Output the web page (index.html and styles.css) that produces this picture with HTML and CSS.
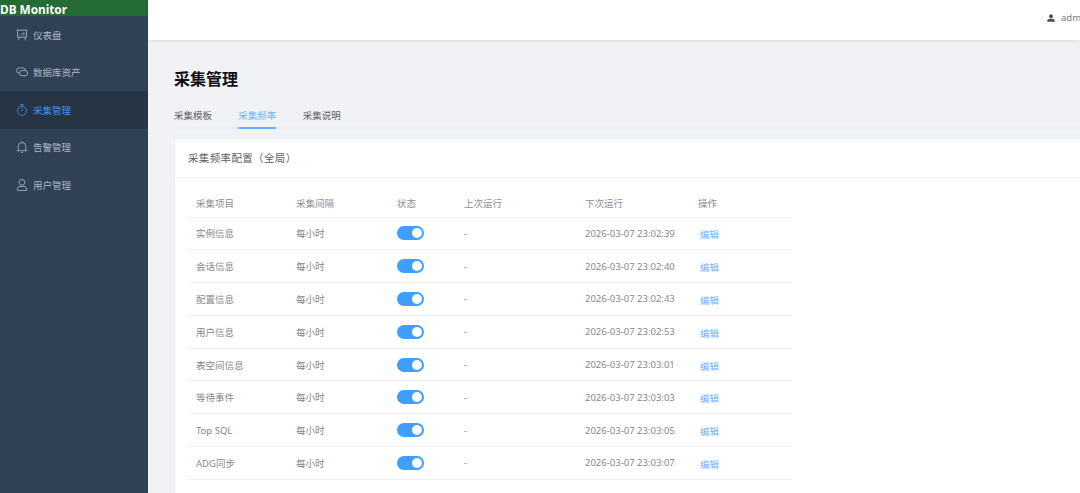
FILE: index.html
```html
<!DOCTYPE html>
<html lang="zh-CN">
<head>
<meta charset="utf-8">
<title>DB Monitor</title>
<link rel="stylesheet" href="styles.css">
</head>
<body>
<div class="app">
  <aside class="sidebar">
    <div class="logo">DB Monitor</div>
    <nav class="menu">
      <a class="menu-item"><svg class="mi" viewBox="0 0 16 16"><path d="M.8 1.5h14.4M2 1.5v9.5h12V1.5M4.5 11L3.3 15M11.5 11l1.2 4M5.5 8.5V7.5M8 8.5V6M10.5 8.5V4.5"/></svg><span>仪表盘</span></a>
      <a class="menu-item"><svg class="mi" viewBox="0 0 16 16"><path d="M5 9.5H4.2a3.5 3.5 0 0 1 0-7h5.3a3.5 3.5 0 0 1 3.4 3"/><rect x="4.5" y="6" width="11" height="7" rx="3.5"/></svg><span>数据库资产</span></a>
      <a class="menu-item active"><svg class="mi" viewBox="0 0 16 16"><circle cx="8" cy="9.2" r="6"/><path d="M5.8.8h4.4M8 .8v2.4M8 6v3.5"/></svg><span>采集管理</span></a>
      <a class="menu-item"><svg class="mi" viewBox="0 0 16 16"><path d="M1 13h14M3 13V7a5 5 0 0 1 10 0v6M8 .5V2M6.5 15.2h3"/></svg><span>告警管理</span></a>
      <a class="menu-item"><svg class="mi" viewBox="0 0 16 16"><circle cx="8" cy="4.5" r="3.8"/><path d="M1.8 15.2v-1.7A3.5 3.5 0 0 1 5.3 10h5.4a3.5 3.5 0 0 1 3.5 3.5v1.7z"/></svg><span>用户管理</span></a>
    </nav>
  </aside>
  <div class="main">
    <header class="topbar">
      <svg class="user-icon" viewBox="0 0 16 16"><circle cx="8" cy="4.5" r="3.8"/><path d="M.5 15.5v-2.7C.5 10.6 3.5 9.5 8 9.5s7.500 1.100 7.500 3.300v2.700z"/></svg>
      <span class="user-name">admin</span>
    </header>
    <main class="content">
      <h1 class="page-title">采集管理</h1>
      <div class="tabs">
        <a class="tab">采集模板</a>
        <a class="tab active">采集频率</a>
        <a class="tab">采集说明</a>
      </div>
      <section class="card">
        <div class="card-header">采集频率配置（全局）</div>
        <div class="card-body">
          <table class="grid">
            <colgroup><col class="c1"><col class="c2"><col class="c3"><col class="c4"><col class="c5"><col class="c6"></colgroup>
            <thead>
              <tr><th>采集项目</th><th>采集间隔</th><th>状态</th><th>上次运行</th><th>下次运行</th><th>操作</th></tr>
            </thead>
            <tbody>
              <tr><td>实例信息</td><td>每小时</td><td><span class="switch"></span></td><td>-</td><td>2026-03-07 23:02:39</td><td><a class="link">编辑</a></td></tr>
              <tr><td>会话信息</td><td>每小时</td><td><span class="switch"></span></td><td>-</td><td>2026-03-07 23:02:40</td><td><a class="link">编辑</a></td></tr>
              <tr><td>配置信息</td><td>每小时</td><td><span class="switch"></span></td><td>-</td><td>2026-03-07 23:02:43</td><td><a class="link">编辑</a></td></tr>
              <tr><td>用户信息</td><td>每小时</td><td><span class="switch"></span></td><td>-</td><td>2026-03-07 23:02:53</td><td><a class="link">编辑</a></td></tr>
              <tr><td>表空间信息</td><td>每小时</td><td><span class="switch"></span></td><td>-</td><td>2026-03-07 23:03:01</td><td><a class="link">编辑</a></td></tr>
              <tr><td>等待事件</td><td>每小时</td><td><span class="switch"></span></td><td>-</td><td>2026-03-07 23:03:03</td><td><a class="link">编辑</a></td></tr>
              <tr><td>Top SQL</td><td>每小时</td><td><span class="switch"></span></td><td>-</td><td>2026-03-07 23:03:05</td><td><a class="link">编辑</a></td></tr>
              <tr><td>ADG同步</td><td>每小时</td><td><span class="switch"></span></td><td>-</td><td>2026-03-07 23:03:07</td><td><a class="link">编辑</a></td></tr>
            </tbody>
          </table>
        </div>
      </section>
    </main>
  </div>
</div>
</body>
</html>
```
FILE: styles.css
```css
* { box-sizing: border-box; }
html, body { margin: 0; height: 100%; overflow: hidden; }
body { font-family: "Noto Sans", "Noto Sans CJK SC", sans-serif; font-size: 9.5px; color: #606266; background: #f0f2f5; }
.app { display: flex; height: 493px; width: 1080px; overflow: hidden; }
.sidebar { width: 148px; flex: none; background: #304156; }
.logo { height: 16px; background: #256b35; color: #fff; font-weight: 700; font-size: 11.8px; line-height: 18px; white-space: nowrap; overflow: hidden; }
.menu-item { display: flex; align-items: center; height: 37.5px; padding-left: 16px; color: #aab6c4; gap: 5px; }
.menu-item.active { background: #263445; color: #3f94ec; }
.mi { width: 12px; height: 12px; fill: none; stroke: currentColor; stroke-width: 1.1; flex: none; }
.main { flex: 1; min-width: 0; display: flex; flex-direction: column; }
.topbar { height: 40px; flex: none; background: #fff; box-shadow: 0 1px 3px rgba(0,21,41,.1); display: flex; align-items: center; padding-left: 899px; white-space: nowrap; overflow: hidden; position: relative; }
.user-icon { width: 8px; height: 8px; fill: #4a4f57; flex: none; margin-right: 6px; margin-top: -5px; }
.user-name { color: #7b7e85; margin-top: -5px; }
.content { flex: 1; min-height: 0; padding: 0 0 0 26px; display: flex; flex-direction: column; }
.page-title { margin: 27px 0 0; font-size: 16px; line-height: 24px; font-weight: 700; color: #101010; }
.tabs { display: flex; gap: 26.3px; margin-top: 14px; height: 24px; border-bottom: 2px solid #e9ecf0; }
.tab { height: 24px; line-height: 21px; color: #5d6066; border-bottom: 2px solid transparent; }
.tab.active { color: #6db3ff; border-bottom-color: #66b1ff; }
.card { margin-top: 9px; flex: 1; min-height: 0; background: #fff; border: 1px solid #ebeef5; border-right: 0; border-bottom: 0; border-radius: 3px 0 0 0; }
.card-header { height: 39px; padding-left: 13px; line-height: 38px; font-size: 10.5px; letter-spacing: .35px; color: #5d6066; border-bottom: 1px solid #f0f1f4; }
.card-body { padding: 12px 0 0 13px; }
.grid { width: 604px; table-layout: fixed; border-collapse: collapse; }
.c1 { width: 100px; } .c2 { width: 101px; } .c3 { width: 67px; } .c4 { width: 121px; } .c5 { width: 113px; } .c6 { width: 102px; }
.grid th { height: 27px; padding: 0 0 0 8px; text-align: left; font-weight: 400; color: #8b8e94; border-bottom: 1px solid #f0f1f4; }
.grid td { height: 32.8px; padding: 0 0 0 8px; color: #85888e; border-bottom: 1px solid #f0f1f4; white-space: nowrap; }
.switch { display: block; width: 27px; height: 14px; border-radius: 7px; background: #409eff; position: relative; }
.switch::after { content: ""; position: absolute; top: 2px; right: 2px; width: 10px; height: 10px; border-radius: 50%; background: #fff; }
.link { color: #6db3ff; padding-left: 2px; position: relative; top: 1px; }
```
